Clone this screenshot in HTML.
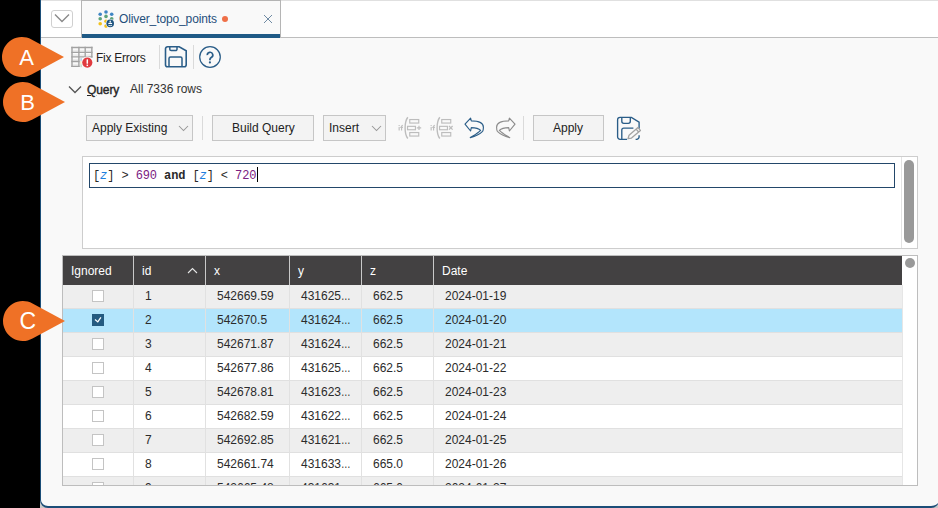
<!DOCTYPE html>
<html><head><meta charset="utf-8">
<style>
*{box-sizing:border-box;margin:0;padding:0}
html,body{width:938px;height:508px;overflow:hidden;background:#000;font-family:"Liberation Sans",sans-serif;font-size:12px;color:#222;position:relative}
.a{position:absolute}
.t{position:absolute;white-space:pre;line-height:14px}
.btn{position:absolute;background:#f3f3f3;border:1px solid #c6c6c6}
.sep{position:absolute;width:1px;background:#dadada}
</style></head><body>
<!-- window -->
<div class="a" style="left:40px;top:496px;width:12px;height:12px;background:#c9c9c9"></div>
<div class="a" style="left:926px;top:496px;width:12px;height:12px;background:#c9c9c9"></div>
<div class="a" style="left:40px;top:0;width:899px;height:508px;background:#f9f9f9;border-left:1px solid #1c4e78;border-bottom:2px solid #1c4e78;border-bottom-left-radius:8px;border-bottom-right-radius:8px"></div>
<!-- tab bar -->
<div class="a" style="left:41px;top:0;width:897px;height:38px;background:#fff;border-top:1px solid #e0e0e0;border-bottom:1px solid #bdbdbd"></div>
<div class="a" style="left:51px;top:10px;width:22px;height:18px;border:1px solid #d0d0d0;border-radius:3px;background:#fff"></div>
<svg class="a" style="left:53px;top:13px" width="18" height="11" viewBox="0 0 18 11"><path d="M2 1.5 L9 8.5 L16 1.5" fill="none" stroke="#8a8a8a" stroke-width="1.4"/></svg>
<!-- tab -->
<div class="a" style="left:81px;top:0;width:200px;height:37px;background:#f9f9f9;border-left:1px solid #b5b5b5;border-right:1px solid #b5b5b5;border-top:1px solid #b3b3b3"></div>
<div class="a" style="left:82px;top:34px;width:198px;height:4px;background:#1f5a86"></div>
<svg class="a" style="left:97px;top:9px" width="20" height="20" viewBox="0 0 20 20">
  <circle cx="9" cy="3" r="1.8" fill="#3f86c4"/>
  <circle cx="3.2" cy="5.2" r="1.8" fill="#3f86c4"/>
  <circle cx="14.7" cy="5.2" r="1.8" fill="#3f86c4"/>
  <circle cx="9" cy="7.4" r="1.8" fill="#5ea37a"/>
  <circle cx="3.2" cy="9.8" r="1.8" fill="#5ea37a"/>
  <circle cx="14.7" cy="9.8" r="1.8" fill="#5ea37a"/>
  <circle cx="9" cy="12.3" r="1.8" fill="#f4c21b"/>
  <circle cx="3.2" cy="14.8" r="1.8" fill="#f4c21b"/>
  <circle cx="9" cy="17.1" r="1.8" fill="#f4c21b"/>
  <circle cx="13.2" cy="14.4" r="4.5" fill="#fafafa"/>
  <circle cx="13.2" cy="14.4" r="3.8" fill="#1f5580"/>
  <rect x="12.55" y="11.7" width="1.3" height="1.9" fill="#fff"/>
  <rect x="11.3" y="13.9" width="3.8" height="1.1" fill="#fff"/>
  <path d="M11.4 16.3 Q13.2 17.1 15 16.3" stroke="#fff" stroke-width="0.8" fill="none"/>
</svg>
<div class="t" style="left:119px;top:12px;color:#1f4f7b;letter-spacing:-0.12px">Oliver_topo_points</div>
<div class="a" style="left:222px;top:16px;width:6px;height:6px;border-radius:50%;background:#ef7048"></div>
<svg class="a" style="left:263px;top:14px" width="10" height="10" viewBox="0 0 10 10"><path d="M1 1L9 9M9 1L1 9" stroke="#6f8aa3" stroke-width="1"/></svg>

<!-- toolbar -->
<svg class="a" style="left:71px;top:46px" width="24" height="24" viewBox="0 0 24 24">
  <g fill="#fcfcfc">
    <rect x="1" y="1.5" width="19.8" height="9.4"/>
    <rect x="1" y="10.9" width="8.5" height="9.5"/>
  </g>
  <g fill="#ececec">
    <rect x="1.7" y="3.8" width="5.5" height="2"/><rect x="8.6" y="3.8" width="5" height="2"/><rect x="14.9" y="3.8" width="5.2" height="2"/>
    <rect x="1.7" y="8.3" width="5.5" height="2"/><rect x="8.6" y="8.3" width="5" height="2"/><rect x="14.9" y="8.3" width="5.2" height="2"/>
    <rect x="1.7" y="12.9" width="5.5" height="2"/><rect x="1.7" y="17.8" width="5.5" height="2"/>
  </g>
  <g stroke="#a2a2a2" stroke-width="1.4" fill="none">
    <path d="M1 0.85 V21.1 M7.9 0.85 V21.1 M14.2 0.85 V11.6 M20.85 0.85 V11.6"/>
    <path d="M0.3 1.55 H21.55 M0.3 6.4 H21.55 M0.3 10.9 H21.55 M0.3 15.5 H8.6 M0.3 20.4 H8.6"/>
  </g>
  <rect x="9.5" y="12.2" width="1.2" height="3" fill="#9cc3e6"/>
  <rect x="9.5" y="15.2" width="1.2" height="3" fill="#f5df9a"/>
  <rect x="9.5" y="18.2" width="1.2" height="3" fill="#b5d8c0"/>
  <circle cx="16.3" cy="16.6" r="6" fill="#fbfbfb"/>
  <circle cx="16.3" cy="16.6" r="5.1" fill="#e03a3e"/>
  <rect x="15.55" y="13.3" width="1.5" height="4.4" rx="0.5" fill="#fff"/>
  <rect x="15.55" y="18.6" width="1.5" height="1.5" fill="#fff"/>
</svg>
<div class="t" style="left:96px;top:51px;color:#1e1e1e;letter-spacing:-0.25px">Fix Errors</div>
<div class="sep" style="left:159px;top:45px;height:24px"></div>
<svg class="a" style="left:164px;top:45px" width="24" height="24" viewBox="0 0 24 24">
  <path d="M3.5 1.8 H15.2 L22.2 5.8 V19.8 A2 2 0 0 1 20.2 21.8 H3.5 A2 2 0 0 1 1.5 19.8 V3.8 A2 2 0 0 1 3.5 1.8 Z" fill="none" stroke="#2a5d88" stroke-width="1.6"/>
  <path d="M5.8 2 V4.2 A1.4 1.4 0 0 0 7.2 5.6 H11.6 A1.4 1.4 0 0 0 13 4.2 V2" fill="none" stroke="#2a5d88" stroke-width="1.5"/>
  <path d="M5 21.5 V13.5 A1.5 1.5 0 0 1 6.5 12 H16.5 A1.5 1.5 0 0 1 18 13.5 V21.5" fill="none" stroke="#2a5d88" stroke-width="1.5"/>
</svg>
<div class="sep" style="left:193px;top:45px;height:24px"></div>
<svg class="a" style="left:198px;top:45px" width="24" height="24" viewBox="0 0 24 24">
  <circle cx="12" cy="12" r="10.3" fill="none" stroke="#2a5d88" stroke-width="1.25"/>
  <path d="M9.3 10.1 A2.75 2.75 0 1 1 13.2 12.5 C12.3 13.1 11.9 13.6 11.9 14.7 V15.2" fill="none" stroke="#2a5d88" stroke-width="1.7"/>
  <circle cx="11.9" cy="17.4" r="1.1" fill="#2a5d88"/>
</svg>

<!-- Query row -->
<svg class="a" style="left:68px;top:85px" width="14" height="9" viewBox="0 0 14 9"><path d="M1 1.5 L7 7.5 L13 1.5" fill="none" stroke="#555" stroke-width="1.3"/></svg>
<div class="t" style="left:87px;top:83px;color:#262626;-webkit-text-stroke:0.4px #262626;letter-spacing:-0.1px"><u>Q</u>uery</div>
<div class="t" style="left:130px;top:82px;color:#333">All 7336 rows</div>

<!-- query toolbar -->
<div class="btn" style="left:86px;top:115px;width:107px;height:26px"></div>
<div class="t" style="left:92px;top:121px;color:#222">Apply Existing</div>
<svg class="a" style="left:178px;top:125px" width="11" height="7" viewBox="0 0 11 7"><path d="M1 1 L5.5 5.5 L10 1" fill="none" stroke="#979797" stroke-width="1.05"/></svg>
<div class="sep" style="left:202px;top:116px;height:24px"></div>
<div class="btn" style="left:212px;top:115px;width:102px;height:26px"></div>
<div class="t" style="left:232px;top:121px;color:#222">Build Query</div>
<div class="btn" style="left:323px;top:115px;width:63px;height:26px"></div>
<div class="t" style="left:329px;top:121px;color:#222">Insert</div>
<svg class="a" style="left:371px;top:125px" width="11" height="7" viewBox="0 0 11 7"><path d="M1 1 L5.5 5.5 L10 1" fill="none" stroke="#979797" stroke-width="1.05"/></svg>

<svg class="a" style="left:396px;top:115px" width="28" height="26" viewBox="0 0 28 26">
  <g fill="none" stroke="#bdbdbd" stroke-width="1.4">
    <path d="M11.8 2.3 C8.2 7 8.2 18.8 11.8 23.5"/>
    <rect x="13.75" y="4.55" width="9" height="3.5" stroke-width="1.15"/>
    <rect x="11.55" y="11.35" width="7.9" height="3.4" stroke-width="1.15"/>
    <rect x="13.75" y="17.55" width="9" height="3.5" stroke-width="1.15"/>
    <path d="M20.8 12.9 H25.2 M23 10.8 V15" stroke-width="1.2"/>
    <path d="M3.15 12 V15.6 M5.6 15.6 V11.4 C5.6 10.6 6 10.3 6.9 10.3 M4.3 12.4 H6.9" stroke-width="1.1"/>
  </g>
  <rect x="2.6" y="10" width="1.1" height="1.1" fill="#bfbfbf"/>
</svg>
<svg class="a" style="left:428px;top:115px" width="28" height="26" viewBox="0 0 28 26">
  <g fill="none" stroke="#bdbdbd" stroke-width="1.4">
    <path d="M11.8 2.3 C8.2 7 8.2 18.8 11.8 23.5"/>
    <rect x="13.75" y="4.55" width="9" height="3.5" stroke-width="1.15"/>
    <rect x="11.55" y="11.35" width="7.9" height="3.4" stroke-width="1.15"/>
    <rect x="13.75" y="17.55" width="9" height="3.5" stroke-width="1.15"/>
    <path d="M21 11 L24.6 14.6 M24.6 11 L21 14.6" stroke-width="1.3"/>
    <path d="M3.15 12 V15.6 M5.6 15.6 V11.4 C5.6 10.6 6 10.3 6.9 10.3 M4.3 12.4 H6.9" stroke-width="1.1"/>
  </g>
  <rect x="2.6" y="10" width="1.1" height="1.1" fill="#bfbfbf"/>
</svg>
<svg class="a" style="left:462px;top:115px" width="24" height="25" viewBox="0 0 24 25">
  <path d="M3 9.2 L8.6 3.1 L9.3 5.9 C14.5 5.9 21.4 7.3 21.4 12.3 C21.4 14.2 21.2 15.5 20.6 16.4 C17.5 19.5 12.5 21.6 8.3 22.6 C11.5 20.6 15.8 18.4 18.6 15.4 C16.8 13.4 12.5 12.6 9.3 12.6 L8.6 16 Z" fill="none" stroke="#2a5d88" stroke-width="1.15" stroke-linejoin="round"/>
</svg>
<svg class="a" style="left:494px;top:115px" width="24" height="25" viewBox="0 0 24 25">
  <g transform="translate(24,0) scale(-1,1)">
  <path d="M3 9.2 L8.6 3.1 L9.3 5.9 C14.5 5.9 21.4 7.3 21.4 12.3 C21.4 14.2 21.2 15.5 20.6 16.4 C17.5 19.5 12.5 21.6 8.3 22.6 C11.5 20.6 15.8 18.4 18.6 15.4 C16.8 13.4 12.5 12.6 9.3 12.6 L8.6 16 Z" fill="none" stroke="#8c8c8c" stroke-width="1.15" stroke-linejoin="round"/>
  </g>
</svg>
<div class="sep" style="left:523px;top:116px;height:24px"></div>
<div class="btn" style="left:533px;top:115px;width:71px;height:26px"></div>
<div class="t" style="left:553px;top:121px;color:#222">Apply</div>
<svg class="a" style="left:616px;top:116px" width="27" height="26" viewBox="0 0 27 26"><g transform="translate(0.6,0.6)">
  <g fill="none" stroke="#2a5d88" stroke-width="1.35">
  <path d="M10.5 22.7 H3.5 A2.5 2.5 0 0 1 1 20.2 V3.3 A2.5 2.5 0 0 1 3.5 0.8 H14.8 L22.5 5.5 V12.2"/>
  <path d="M22.5 18.6 V20.2 A2.5 2.5 0 0 1 20 22.7 H19"/>
  <path d="M5.2 1 V4.7 A2 2 0 0 0 7.2 6.7 H11.7 A2 2 0 0 0 13.7 4.7 V1"/>
  <path d="M5.2 22.5 V13.5 A2 2 0 0 1 7.2 11.5 H16.8"/>
  </g>
  <path d="M11.40 22.00 L14.91 21.49 L23.84 13.84 L21.36 10.96 L12.44 18.61 Z M22.01 15.40 L19.54 12.52" fill="#f9f9f9" stroke="#a3a3a3" stroke-width="1.3" stroke-linejoin="round"/>
</g></svg>

<!-- query editor -->
<div class="a" style="left:82px;top:156px;width:836px;height:93px;background:#fff;border:1px solid #cdcdcd"></div>
<div class="a" style="left:89px;top:163px;width:806px;height:25px;border:1px solid #23476a;background:#fff"></div>
<div class="t" style="left:93px;top:169px;font-family:'Liberation Mono',monospace;font-size:12px;letter-spacing:-0.1px;color:#2a2a2a">[<i style="color:#1f80dd">z</i>] &gt; <span style="color:#7b2182">690</span> <b>and</b> [<i style="color:#1f80dd">z</i>] &lt; <span style="color:#7b2182">720</span></div>
<div class="a" style="left:257px;top:167px;width:1px;height:15px;background:#000"></div>
<div class="a" style="left:901px;top:157px;width:1px;height:91px;background:#e3e3e3"></div>
<div class="a" style="left:904px;top:160px;width:10px;height:83px;border-radius:5px;background:#999"></div>

<!-- table -->
<div class="a" style="left:62px;top:255px;width:856px;height:231px;background:#fff;border:1px solid #bdbdbd"></div>
<div class="a" style="left:63px;top:256px;width:839px;height:29px;background:#434142"></div>
<div class="a" style="left:905px;top:258px;width:10px;height:10px;border-radius:50%;background:#999"></div>
<div id="rows">
<div class="t" style="left:71px;top:264px;color:#fff">Ignored</div>
<div class="t" style="left:142px;top:264px;color:#fff">id</div>
<div class="t" style="left:214px;top:264px;color:#fff">x</div>
<div class="t" style="left:298px;top:264px;color:#fff">y</div>
<div class="t" style="left:370px;top:264px;color:#fff">z</div>
<div class="t" style="left:442px;top:264px;color:#fff">Date</div>
<svg class="a" style="left:187px;top:267px" width="11" height="7" viewBox="0 0 11 7"><path d="M1 6 L5.5 1.5 L10 6" fill="none" stroke="#e6e6e6" stroke-width="1.1"/></svg>
<div class="a" style="left:133px;top:256px;width:1px;height:29px;background:#c9c9c9"></div>
<div class="a" style="left:205px;top:256px;width:1px;height:29px;background:#c9c9c9"></div>
<div class="a" style="left:289px;top:256px;width:1px;height:29px;background:#c9c9c9"></div>
<div class="a" style="left:361px;top:256px;width:1px;height:29px;background:#c9c9c9"></div>
<div class="a" style="left:433px;top:256px;width:1px;height:29px;background:#c9c9c9"></div>
<div class="a" style="left:63px;top:285px;width:839px;height:200px;overflow:hidden">
<div class="a" style="left:0;top:0px;width:839px;height:23px;background:#eeeeee"></div>
<div class="a" style="left:0;top:23px;width:839px;height:1px;background:#e0e0e0"></div>
<div class="a" style="left:29px;top:5px;width:12px;height:12px;background:#fff;border:1px solid #c4c4c4"></div>
<div class="t" style="left:82px;top:4px;color:#2b2b2b">1</div>
<div class="t" style="left:154px;top:4px;color:#2b2b2b">542669.59</div>
<div class="t" style="left:238px;top:4px;color:#2b2b2b">431625<span style="display:inline-block;transform:scaleX(0.8);transform-origin:0 0">…</span></div>
<div class="t" style="left:310px;top:4px;color:#2b2b2b">662.5</div>
<div class="t" style="left:382px;top:4px;color:#2b2b2b">2024-01-19</div>
<div class="a" style="left:0;top:24px;width:839px;height:23px;background:#b3e5fc"></div>
<div class="a" style="left:0;top:47px;width:839px;height:1px;background:#e0e0e0"></div>
<svg class="a" style="left:29px;top:29px" width="12" height="12" viewBox="0 0 12 12"><rect width="12" height="12" fill="#245a80"/><path d="M3 5.5 L5.8 7.9 L8.9 3.3" fill="none" stroke="#fff" stroke-width="1.25"/></svg>
<div class="t" style="left:82px;top:28px;color:#2b2b2b">2</div>
<div class="t" style="left:154px;top:28px;color:#2b2b2b">542670.5</div>
<div class="t" style="left:238px;top:28px;color:#2b2b2b">431624<span style="display:inline-block;transform:scaleX(0.8);transform-origin:0 0">…</span></div>
<div class="t" style="left:310px;top:28px;color:#2b2b2b">662.5</div>
<div class="t" style="left:382px;top:28px;color:#2b2b2b">2024-01-20</div>
<div class="a" style="left:0;top:48px;width:839px;height:23px;background:#eeeeee"></div>
<div class="a" style="left:0;top:71px;width:839px;height:1px;background:#e0e0e0"></div>
<div class="a" style="left:29px;top:53px;width:12px;height:12px;background:#fff;border:1px solid #c4c4c4"></div>
<div class="t" style="left:82px;top:52px;color:#2b2b2b">3</div>
<div class="t" style="left:154px;top:52px;color:#2b2b2b">542671.87</div>
<div class="t" style="left:238px;top:52px;color:#2b2b2b">431624<span style="display:inline-block;transform:scaleX(0.8);transform-origin:0 0">…</span></div>
<div class="t" style="left:310px;top:52px;color:#2b2b2b">662.5</div>
<div class="t" style="left:382px;top:52px;color:#2b2b2b">2024-01-21</div>
<div class="a" style="left:0;top:72px;width:839px;height:23px;background:#ffffff"></div>
<div class="a" style="left:0;top:95px;width:839px;height:1px;background:#e0e0e0"></div>
<div class="a" style="left:29px;top:77px;width:12px;height:12px;background:#fff;border:1px solid #c4c4c4"></div>
<div class="t" style="left:82px;top:76px;color:#2b2b2b">4</div>
<div class="t" style="left:154px;top:76px;color:#2b2b2b">542677.86</div>
<div class="t" style="left:238px;top:76px;color:#2b2b2b">431625<span style="display:inline-block;transform:scaleX(0.8);transform-origin:0 0">…</span></div>
<div class="t" style="left:310px;top:76px;color:#2b2b2b">662.5</div>
<div class="t" style="left:382px;top:76px;color:#2b2b2b">2024-01-22</div>
<div class="a" style="left:0;top:96px;width:839px;height:23px;background:#eeeeee"></div>
<div class="a" style="left:0;top:119px;width:839px;height:1px;background:#e0e0e0"></div>
<div class="a" style="left:29px;top:101px;width:12px;height:12px;background:#fff;border:1px solid #c4c4c4"></div>
<div class="t" style="left:82px;top:100px;color:#2b2b2b">5</div>
<div class="t" style="left:154px;top:100px;color:#2b2b2b">542678.81</div>
<div class="t" style="left:238px;top:100px;color:#2b2b2b">431623<span style="display:inline-block;transform:scaleX(0.8);transform-origin:0 0">…</span></div>
<div class="t" style="left:310px;top:100px;color:#2b2b2b">662.5</div>
<div class="t" style="left:382px;top:100px;color:#2b2b2b">2024-01-23</div>
<div class="a" style="left:0;top:120px;width:839px;height:23px;background:#ffffff"></div>
<div class="a" style="left:0;top:143px;width:839px;height:1px;background:#e0e0e0"></div>
<div class="a" style="left:29px;top:125px;width:12px;height:12px;background:#fff;border:1px solid #c4c4c4"></div>
<div class="t" style="left:82px;top:124px;color:#2b2b2b">6</div>
<div class="t" style="left:154px;top:124px;color:#2b2b2b">542682.59</div>
<div class="t" style="left:238px;top:124px;color:#2b2b2b">431622<span style="display:inline-block;transform:scaleX(0.8);transform-origin:0 0">…</span></div>
<div class="t" style="left:310px;top:124px;color:#2b2b2b">662.5</div>
<div class="t" style="left:382px;top:124px;color:#2b2b2b">2024-01-24</div>
<div class="a" style="left:0;top:144px;width:839px;height:23px;background:#eeeeee"></div>
<div class="a" style="left:0;top:167px;width:839px;height:1px;background:#e0e0e0"></div>
<div class="a" style="left:29px;top:149px;width:12px;height:12px;background:#fff;border:1px solid #c4c4c4"></div>
<div class="t" style="left:82px;top:148px;color:#2b2b2b">7</div>
<div class="t" style="left:154px;top:148px;color:#2b2b2b">542692.85</div>
<div class="t" style="left:238px;top:148px;color:#2b2b2b">431621<span style="display:inline-block;transform:scaleX(0.8);transform-origin:0 0">…</span></div>
<div class="t" style="left:310px;top:148px;color:#2b2b2b">662.5</div>
<div class="t" style="left:382px;top:148px;color:#2b2b2b">2024-01-25</div>
<div class="a" style="left:0;top:168px;width:839px;height:23px;background:#ffffff"></div>
<div class="a" style="left:0;top:191px;width:839px;height:1px;background:#e0e0e0"></div>
<div class="a" style="left:29px;top:173px;width:12px;height:12px;background:#fff;border:1px solid #c4c4c4"></div>
<div class="t" style="left:82px;top:172px;color:#2b2b2b">8</div>
<div class="t" style="left:154px;top:172px;color:#2b2b2b">542661.74</div>
<div class="t" style="left:238px;top:172px;color:#2b2b2b">431633<span style="display:inline-block;transform:scaleX(0.8);transform-origin:0 0">…</span></div>
<div class="t" style="left:310px;top:172px;color:#2b2b2b">665.0</div>
<div class="t" style="left:382px;top:172px;color:#2b2b2b">2024-01-26</div>
<div class="a" style="left:0;top:192px;width:839px;height:23px;background:#eeeeee"></div>
<div class="a" style="left:0;top:215px;width:839px;height:1px;background:#e0e0e0"></div>
<div class="a" style="left:29px;top:197px;width:12px;height:12px;background:#fff;border:1px solid #c4c4c4"></div>
<div class="t" style="left:82px;top:196px;color:#2b2b2b">9</div>
<div class="t" style="left:154px;top:196px;color:#2b2b2b">542665.48</div>
<div class="t" style="left:238px;top:196px;color:#2b2b2b">431631<span style="display:inline-block;transform:scaleX(0.8);transform-origin:0 0">…</span></div>
<div class="t" style="left:310px;top:196px;color:#2b2b2b">665.0</div>
<div class="t" style="left:382px;top:196px;color:#2b2b2b">2024-01-27</div>
<div class="a" style="left:70px;top:0;width:1px;height:200px;background:#e1e1e1"></div>
<div class="a" style="left:142px;top:0;width:1px;height:200px;background:#e1e1e1"></div>
<div class="a" style="left:226px;top:0;width:1px;height:200px;background:#e1e1e1"></div>
<div class="a" style="left:298px;top:0;width:1px;height:200px;background:#e1e1e1"></div>
<div class="a" style="left:370px;top:0;width:1px;height:200px;background:#e1e1e1"></div>
</div>
<div class="a" style="left:902px;top:285px;width:1px;height:200px;background:#e6e6e6"></div>
</div><!--/rows-->
<!-- callouts -->
<svg class="a" style="left:0;top:0" width="938" height="508" viewBox="0 0 938 508">
  <g fill="#ef7126">
    <path d="M31.52 39.41 L64.00 57.00 L31.52 74.59 A20.00 20.00 0 1 1 31.52 39.41 Z"/>
    <path d="M32.52 84.41 L65.00 102.00 L32.52 119.59 A20.00 20.00 0 1 1 32.52 84.41 Z"/>
    <path d="M32.52 303.41 L65.00 321.00 L32.52 338.59 A20.00 20.00 0 1 1 32.52 303.41 Z"/>
  </g>
  <g fill="#fff" font-family="Liberation Sans" font-size="22" text-anchor="middle">
    <text x="26.5" y="64.7">A</text>
    <text x="27.7" y="109.7">B</text>
    <text x="27.8" y="328.6" font-size="23">C</text>
  </g>
</svg>
</body></html>
